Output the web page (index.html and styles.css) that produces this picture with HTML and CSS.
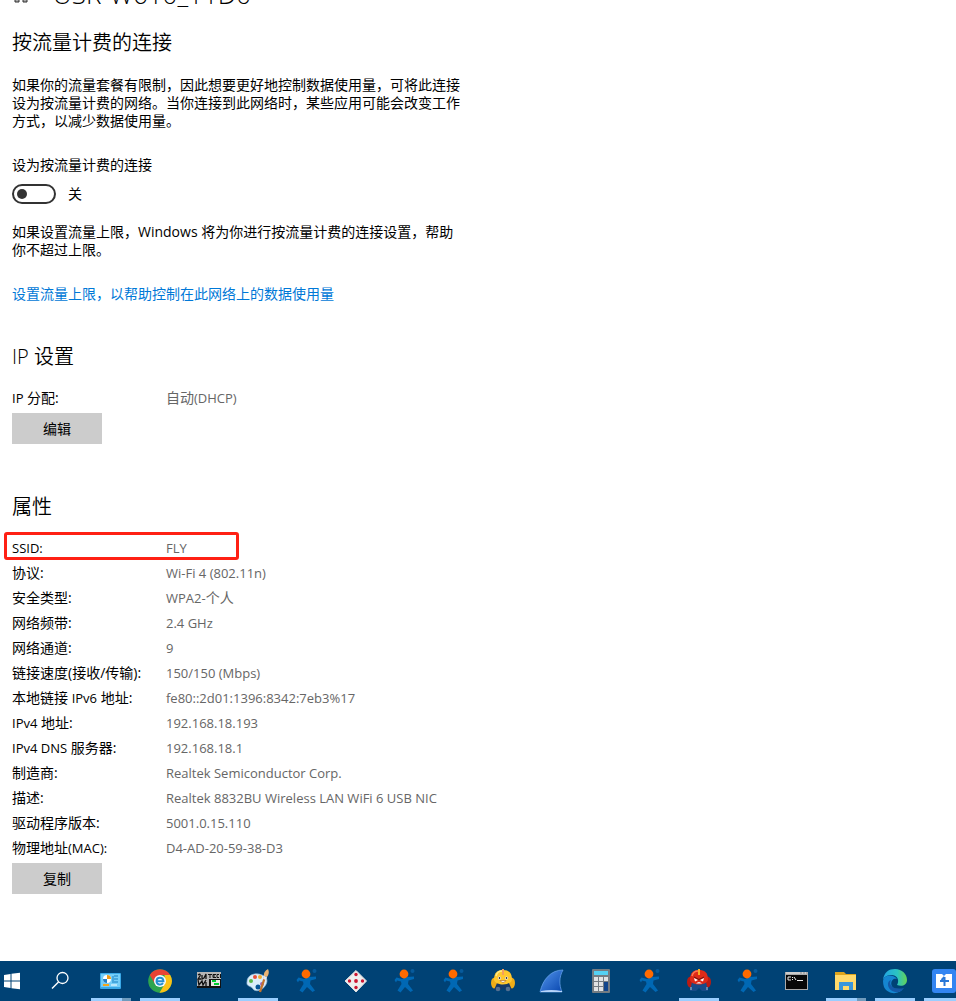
FILE: index.html
```html
<!DOCTYPE html>
<html lang="zh-CN">
<head>
<meta charset="utf-8">
<title>网络设置</title>
<link rel="stylesheet" href="styles.css">
</head>
<body>
<svg class="defs" aria-hidden="true">
  <symbol id="person" viewBox="0 0 28 28">
    <circle cx="22.500" cy="4" r="2" fill="#075a9b"/>
    <path d="M4.500 13L6.500 10.500L12 12L17 10L24 9.500V12L18.500 13.500L18 17L23 23.500L20.500 25L15 20L10.500 25.500L7.500 23.500L11.500 17L11 14.500L7 13.500L6 15.500Z" fill="#0068b4"/>
    <circle cx="14" cy="7" r="4.400" fill="#ff6a00"/>
  </symbol>
</svg>
<main class="page">
  <header class="network">
    <svg class="network-icon" viewBox="0 0 20 28" aria-hidden="true"><path d="M3 17h4v5H3zM11 17h4v5h-4z" fill="#aaa" stroke="#333" stroke-width="1"/></svg>
    <h1 class="network-name">USR-W610_11D0</h1>
  </header>

  <section class="metered">
    <h2 class="heading">按流量计费的连接</h2>
    <p class="text">如果你的流量套餐有限制，因此想要更好地控制数据使用量，可将此连接设为按流量计费的网络。当你连接到此网络时，某些应用可能会改变工作方式，以减少数据使用量。</p>
    <label class="label" for="metered">设为按流量计费的连接</label>
    <div class="switch-row">
      <input class="switch" type="checkbox" role="switch" id="metered">
      <span>关</span>
    </div>
    <p class="text">如果设置流量上限，Windows 将为你进行按流量计费的连接设置，帮助你不超过上限。</p>
    <a class="link" href="#limit">设置流量上限，以帮助控制在此网络上的数据使用量</a>
  </section>

  <section class="group">
    <h2 class="heading">IP 设置</h2>
    <table class="props">
      <tr><th scope="row"><span class="latin">IP</span> 分配:</th><td>自动<span class="latin">(DHCP)</span></td></tr>
    </table>
    <button class="btn" type="button">编辑</button>
  </section>

  <section class="group details">
    <h2 class="heading">属性</h2>
    <table class="props">
      <tr class="marked"><th scope="row"><span class="latin">SSID:</span></th><td><span class="latin">FLY</span></td></tr>
      <tr><th scope="row">协议:</th><td><span class="latin">Wi-Fi 4 (802.11n)</span></td></tr>
      <tr><th scope="row">安全类型:</th><td><span class="latin">WPA2-</span>个人</td></tr>
      <tr><th scope="row">网络频带:</th><td><span class="latin">2.4 GHz</span></td></tr>
      <tr><th scope="row">网络通道:</th><td><span class="latin">9</span></td></tr>
      <tr><th scope="row">链接速度(接收/传输):</th><td><span class="latin">150/150 (Mbps)</span></td></tr>
      <tr><th scope="row">本地链接 <span class="latin">IPv6</span> 地址:</th><td><span class="latin">fe80::2d01:1396:8342:7eb3%17</span></td></tr>
      <tr><th scope="row"><span class="latin">IPv4</span> 地址:</th><td><span class="latin">192.168.18.193</span></td></tr>
      <tr><th scope="row"><span class="latin">IPv4 DNS</span> 服务器:</th><td><span class="latin">192.168.18.1</span></td></tr>
      <tr><th scope="row">制造商:</th><td><span class="latin">Realtek Semiconductor Corp.</span></td></tr>
      <tr><th scope="row">描述:</th><td><span class="latin">Realtek 8832BU Wireless LAN WiFi 6 USB NIC</span></td></tr>
      <tr><th scope="row">驱动程序版本:</th><td><span class="latin">5001.0.15.110</span></td></tr>
      <tr><th scope="row">物理地址<span class="latin">(MAC):</span></th><td><span class="latin">D4-AD-20-59-38-D3</span></td></tr>
    </table>
    <button class="btn" type="button">复制</button>
  </section>
</main>

<nav class="taskbar" aria-label="任务栏">
  <button class="task" type="button" aria-label="开始"><svg viewBox="0 0 28 28"><path d="M6 8L12.500 7V13.500H6zM13.500 6.800L22 5.700V13.500H13.500zM6 14.500H12.500V21L6 20zM13.500 14.500H22V22.300L13.500 21.200z" fill="#fff"/></svg></button>
  <button class="task" type="button" aria-label="搜索"><svg viewBox="0 0 28 28"><circle cx="15.500" cy="11" r="5.500" fill="none" stroke="#fff" stroke-width="1.300"/><path d="M11.500 15L5 21.500" stroke="#fff" stroke-width="1.500"/></svg></button>
  <button class="task open stacked" type="button" aria-label="控制面板"><svg viewBox="0 0 28 28"><rect x="4" y="6" width="21" height="16" rx="1" fill="#3aa9e8"/><rect x="5" y="7" width="19" height="13" fill="#75cef8"/><circle cx="11" cy="12" r="4" fill="#fff"/><path d="M11 12V8a4 4 0 0 1 4 4z" fill="#f29b17"/><path d="M11 12H7a4 4 0 0 0 4 4z" fill="#237fc4"/><path d="M18 9h4M18 12h4M18 15h4M17 9v7" stroke="#1980c4"/><path d="M7 18h6" stroke="#f4a51b" stroke-width="2"/><path d="M15 18h6" stroke="#fff"/></svg></button>
  <button class="task open" type="button" aria-label="Chrome"><svg viewBox="0 0 28 28"><circle cx="15" cy="14" r="11.800" fill="#2da44e"/><path d="M4.800 8A11.800 11.800 0 0 1 25.200 8H15L10 17z" fill="#e94335"/><path d="M25.200 8A11.800 11.800 0 0 1 14.500 25.800L20 16.500L19.500 8z" fill="#fbc116"/><circle cx="15" cy="14" r="6" fill="#f4fbff"/><path d="M11.500 14.200H18.500C18.300 9.500 11.500 9.500 11.500 14.200C11.500 18 16.500 18.500 18 16" fill="none" stroke="#238ed0" stroke-width="1.900"/></svg></button>
  <button class="task" type="button" aria-label="WinTech"><svg viewBox="0 0 28 28"><path fill="#b6b6b6" d="M3 5h24v15H3z"/><path fill="#111" d="M3 19h24v2H3z"/><path d="M4 8q3-2 2 1l-2 3h3M8 8v4l2-1 2-4v5M4 13l1 5 3-4 1 4 3-5M12 15v4" fill="none" stroke="#111" stroke-width="1.300"/><path d="M14 7.500h4M16 7v4M22 7.500h-3v3h3M19 9h2M25 7.500h-2v3h2M26.500 7v4" fill="none" stroke="#111"/><path fill="#111" d="M15 12h12v7H15z"/><path fill="#e8e8e8" d="M17 13h9v6h-9z"/><path fill="#00c932" d="M18 13h4v2h-4zM20 16h5v2h-5z"/></svg></button>
  <button class="task open" type="button" aria-label="画图"><svg viewBox="0 0 28 28"><path d="M4 15C4 8 12 5 19 8C25 10 25 15 22 19C19 24 12 25 10 22C9 19 3 20 4 15z" fill="#dceefa" stroke="#91b8d4" stroke-width=".7"/><circle cx="8" cy="14" r="2" fill="#5cb947"/><circle cx="12" cy="10" r="2" fill="#e55039"/><circle cx="17" cy="10" r="2" fill="#efaa31"/><circle cx="15" cy="20" r="2.500" fill="#075596"/><circle cx="19" cy="17" r="2" fill="#9a65bb"/><path d="M17 25L22 10" stroke="#c3732c" stroke-width="2.300"/><path d="M21 9Q20 5 25 2Q27 6 24 10z" fill="#e9b373"/><path d="M21 9l3 1-1 3-3-1z" fill="#e4e8ee"/></svg></button>
  <button class="task" type="button" aria-label="USR 1"><svg><use href="#person"/></svg></button>
  <button class="task" type="button" aria-label="骰子"><svg viewBox="0 0 28 28"><path d="M15 3.500L25.500 14L15 25L4 14z" fill="#eee" stroke="#ddd" stroke-width="1" stroke-linejoin="round"/><g fill="#cc1632"><circle cx="15" cy="7.500" r="1.700"/><circle cx="8.500" cy="14" r="1.700"/><circle cx="15" cy="14" r="1.900"/><circle cx="21.500" cy="14" r="1.700"/><circle cx="15" cy="20.500" r="1.700"/></g></svg></button>
  <button class="task" type="button" aria-label="USR 2"><svg><use href="#person"/></svg></button>
  <button class="task" type="button" aria-label="USR 3"><svg><use href="#person"/></svg></button>
  <button class="task" type="button" aria-label="黄色助手"><svg viewBox="0 0 28 28"><ellipse cx="6.500" cy="16" rx="3.500" ry="5.500" fill="#f0ad18"/><ellipse cx="23.500" cy="16" rx="3.500" ry="5.500" fill="#f0ad18"/><path d="M9 16h12l3 7h-7l-2-2-2 2H6z" fill="#153768"/><path d="M6 13C6 5 10 3 15 3C20 3 24 5 24 13C22 19 8 19 6 13z" fill="#ffc72e"/><path d="M8 9C9 5 12 4 14 4" fill="none" stroke="#ffec88" stroke-width="1.500"/><path d="M14 8V2h2v6z" fill="#f29e61"/><circle cx="11.500" cy="11" r="1.600" fill="#fff"/><circle cx="18.500" cy="11" r="1.600" fill="#fff"/><circle cx="11.500" cy="11" r=".9" fill="#333"/><circle cx="18.500" cy="11" r=".9" fill="#333"/><path d="M12 13.500h6q-3 4-6 0z" fill="#fff" stroke="#a55a18" stroke-width=".6"/><circle cx="10" cy="22" r="2.300" fill="#536f91"/><circle cx="20" cy="22" r="2.300" fill="#536f91"/></svg></button>
  <button class="task" type="button" aria-label="Wireshark"><svg viewBox="0 0 28 28"><defs><linearGradient id="fin" x2="1" y2="1"><stop stop-color="#5597ed"/><stop offset="1" stop-color="#0745ad"/></linearGradient></defs><path d="M3 25C6 12 14 3 26 3C22 10 22 18 25 25z" fill="url(#fin)" stroke="#6ca7ef" stroke-width=".7"/><path d="M4 24q10-2 21 0v1H4z" fill="#b7d5fa"/></svg></button>
  <button class="task" type="button" aria-label="计算器"><svg viewBox="0 0 28 28"><rect x="6" y="2" width="18" height="24" rx="1" fill="#747c83"/><rect x="8" y="4" width="14" height="4" fill="#54d1f4"/><path d="M8 10h4v4H8zM13 10h4v4h-4zM18 10h4v4h-4zM8 15h4v4H8zM13 15h4v4h-4zM8 20h4v4H8zM13 20h4v4h-4z" fill="#e1e3e5"/><path d="M18 15h4v9h-4z" fill="#12458c"/></svg></button>
  <button class="task" type="button" aria-label="USR 4"><svg><use href="#person"/></svg></button>
  <button class="task open" type="button" aria-label="红色助手"><svg viewBox="0 0 28 28"><ellipse cx="6.500" cy="15" rx="3.500" ry="5.500" fill="#b91b13"/><ellipse cx="23.500" cy="15" rx="3.500" ry="5.500" fill="#b91b13"/><path d="M8 15h14l2 9h-6l-3-3-3 3H6z" fill="#174b87"/><path d="M6 13C6 5 10 3 15 3C20 3 24 5 24 13C22 19 8 19 6 13z" fill="#de2a18"/><path d="M8 9C9 5 12 4 14 4" fill="none" stroke="#ff7854" stroke-width="1.500"/><path d="M14 8V2h2v6z" fill="#f9aa24"/><path d="M10 11l4 2-3 1.500zM20 11l-4 2 3 1.500z" fill="#fff"/><path d="M10 10l5 2.500 5-2.500" fill="none" stroke="#65120e"/><path d="M12 16.500q3-3 6 0z" fill="#eee"/><path d="M7 20v3M23 20v3" stroke="#6387ad" stroke-width="2"/></svg></button>
  <button class="task" type="button" aria-label="USR 5"><svg><use href="#person"/></svg></button>
  <button class="task" type="button" aria-label="命令提示符"><svg viewBox="0 0 28 28"><path d="M3 5h23v18H3z" fill="#aaa"/><path d="M4 8h21v14H4z" fill="#080808"/><path d="M4 6h14M20 6h1M23 6h1" stroke="#eee"/><path d="M9 10H6v3h3M10.500 10v1M10.500 12v1M12 10l2 3M15 13.500h6" fill="none" stroke="#eee"/></svg></button>
  <button class="task open stacked" type="button" aria-label="文件资源管理器"><svg viewBox="0 0 28 28"><path d="M4 5h9l2 2h10v5H4z" fill="#dda41d"/><path d="M4 8h21v15H4z" fill="#ffd96b"/><path d="M8 23v-8h14v8h-4v-4h-6v4z" fill="#3996dc"/></svg></button>
  <button class="task open" type="button" aria-label="Edge"><svg viewBox="0 0 28 28"><defs><linearGradient id="edge"><stop stop-color="#22a4e4"/><stop offset=".6" stop-color="#2bc4c1"/><stop offset="1" stop-color="#66d454"/></linearGradient></defs><path d="M3 13C4 5 9 2 15 2C22 2 27 7 27 13C27 18 22 20 17 18C19 15 19 9 12 8C7 8 4 10 3 13z" fill="url(#edge)"/><path d="M3 14C4 7 14 7 17 12C11 10 8 20 17 23Q21 25 24 21C19 28 8 28 4 20Q3 17 3 14z" fill="#1586d1"/><path d="M11 13C8 19 14 23 24 21C20 27 12 26 9 21C7 17 8 14 11 13z" fill="#1459a8"/></svg></button>
  <button class="task open" type="button" aria-label="USR 工具"><svg viewBox="0 0 28 28"><rect x="3" y="2" width="24" height="24" rx="3" fill="#3385f2"/><path d="M7 7h6l2 2 2-2h6v14H7z" fill="#fff"/><path d="M15.500 19V10M15.500 10l-3 3M11 14h9" fill="none" stroke="#2877d8" stroke-width="2"/></svg></button>
</nav>
</body>
</html>
```
FILE: styles.css
```css
*, *::before, *::after { box-sizing: border-box; }

body {
  display: flex;
  flex-direction: column;
  min-height: 100vh;
  margin: 0;
  overflow-x: hidden;
  background: #fff;
  color: #000;
  font: 14px/18px "Open Sans", "Noto Sans CJK SC", sans-serif;
}

h1, h2, p { margin: 0; font-weight: 400; }

.defs { display: none; }

.page { flex: 1; padding: 0 12px 32px; overflow: hidden; }

.network {
  display: flex;
  align-items: center;
  gap: 21px;
  height: 28px;
  margin-top: -20px;
}
.network-icon { width: 20px; height: 28px; }
.network-name { font-size: 26px; font-weight: 300; line-height: 28px; }

.metered {
  display: flex;
  flex-direction: column;
  align-items: flex-start;
  max-width: 450px;
  padding-top: 21px;
}

.heading { font-size: 20px; font-weight: 350; line-height: 28px; }
.metered .text { margin-top: 19px; }
.metered .label { margin-top: 26px; }
.latin { font-size: 13px; }

.switch-row {
  display: flex;
  align-items: center;
  gap: 12px;
  height: 20px;
  margin-top: 10px;
}
.switch {
  display: flex;
  align-items: center;
  appearance: none;
  width: 44px;
  height: 20px;
  margin: 0;
  padding: 0 3px;
  border: 2px solid #333;
  border-radius: 10px;
}
.switch::before {
  width: 10px;
  height: 10px;
  border-radius: 50%;
  background: #333;
  content: "";
}
.switch:checked { justify-content: flex-end; }

.link { margin-top: 26px; color: #0078d7; text-decoration: none; }

.group { padding-top: 40px; }
.details { padding-top: 49px; }

.props { margin-top: 14px; border-collapse: collapse; }
.props tr { position: relative; height: 25px; }
.props th, .props td { padding: 0; font-weight: 400; text-align: left; white-space: nowrap; }
.props th { width: 154px; }
.props td { color: #666; }

.marked::after {
  position: absolute;
  top: -3px;
  left: -8px;
  width: 235px;
  height: 28px;
  border: 3px solid #ff2014;
  border-radius: 3px;
  content: "";
}

.btn {
  width: 90px;
  height: 31px;
  margin-top: 3px;
  padding: 0;
  border: 0;
  background: #ccc;
  color: #000;
  font: inherit;
}

.taskbar {
  display: flex;
  gap: 9px;
  height: 40px;
  overflow: hidden;
  background: #004275;
}
.task {
  flex: none;
  display: grid;
  place-items: center;
  width: 40px;
  height: 40px;
  padding: 0 2px 0 0;
  border: 0;
  background: none;
}
.task:first-child { margin-left: -7px; }
.task svg { width: 28px; height: 28px; }
.open { box-shadow: inset 0 -3px #99ceff; }
.stacked {
  box-shadow: none;
  background: linear-gradient(90deg, #99ceff 31px, #6f9bbd 31px) bottom / 100% 3px no-repeat;
}
```
